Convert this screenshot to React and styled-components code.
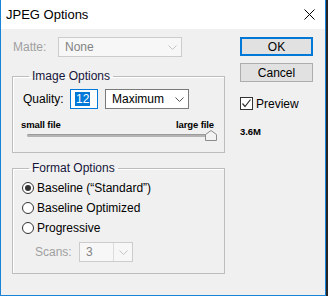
import React from 'react';
import styled, { createGlobalStyle } from 'styled-components';

const GlobalStyle = createGlobalStyle`
  html, body {
    margin: 0;
    padding: 0;
    background: #262626;
  }
  body {
    font-family: "Liberation Sans", Arial, sans-serif;
    font-size: 12px;
    color: #000;
  }
`;

const Window = styled('div')`
  width: 326px;
  height: 296px;
  box-sizing: border-box;
  border: 1px solid #1883d7;
  border-top: none;
  background: #f0f0f0;
  display: flex;
  flex-direction: column;
`;

const TitleBar = styled('div')`
  height: 29px;
  flex: none;
  background: #fff;
  display: flex;
  align-items: center;
  justify-content: space-between;
  padding: 0 10px 0 5px;
  font-size: 13px;
  color: #000;
`;

const Body = styled('div')`
  display: flex;
  gap: 15px;
  padding: 8px 0 0 11px;
`;

const LeftColumn = styled('div')`
  width: 213px;
  display: flex;
  flex-direction: column;
`;

const RightColumn = styled('div')`
  width: 73px;
  display: flex;
  flex-direction: column;
`;

const Row = styled('div')`
  display: flex;
  align-items: center;
  gap: ${(p) => p.gap || 0}px;
  padding-left: ${(p) => p.indent || 0}px;
  margin-top: ${(p) => p.top || 0}px;
  height: ${(p) => p.h || 20}px;
`;

const Label = styled('span')`
  color: ${(p) => (p.disabled ? '#a0a0a0' : '#000')};
  width: ${(p) => (p.w ? `${p.w}px` : 'auto')};
  flex: none;
`;

const SelectBox = styled('div')`
  width: ${(p) => p.w}px;
  height: 20px;
  box-sizing: border-box;
  margin-left: ${(p) => p.left || 0}px;
  border: 1px solid ${(p) => (p.disabled ? '#cccccc' : '#7a7a7a')};
  background: ${(p) => (p.disabled ? '#f7f7f7' : '#fff')};
  color: ${(p) => (p.disabled ? '#838383' : '#000')};
  display: flex;
  align-items: center;
  padding-left: 6px;
  flex: none;
`;

const SelectText = styled('span')`
  flex: 1;
`;

const SelectArrow = styled('span')`
  width: 18px;
  height: 100%;
  display: flex;
  align-items: center;
  justify-content: center;
  border-left: ${(p) => (p.split ? '1px solid #dcdcdc' : 'none')};
`;

const Group = styled('fieldset')`
  margin: ${(p) => p.top}px 0 0;
  padding: 0;
  height: ${(p) => p.h}px;
  box-sizing: border-box;
  border: 1px solid #bdbdbd;
  box-shadow: inset 1px 1px 0 #fff;
  min-width: 0;
`;

const Legend = styled('legend')`
  margin-left: 16px;
  padding: 0 3px;
  font-size: 12px;
  color: #15153a;
  line-height: 14px;
`;

const QualityInput = styled('div')`
  width: 28px;
  height: 20px;
  box-sizing: border-box;
  border: 1px solid #0078d7;
  background: #fff;
  display: flex;
  align-items: center;
  padding-left: 4px;
  flex: none;
`;

const Selected = styled('span')`
  background: #0078d7;
  color: #fff;
  line-height: 14px;
  padding: 0 1px;
`;

const SmallText = styled('span')`
  font-size: 9.5px;
  color: #000;
  font-weight: 600;
  letter-spacing: -0.1px;
`;

const FileLabels = styled('div')`
  display: flex;
  justify-content: space-between;
  padding: 0 10px 0 8px;
  margin-top: 9px;
  height: 12px;
  align-items: center;
`;

const SliderArea = styled('div')`
  position: relative;
  margin: 1px 10px 0 14px;
  height: 10px;
`;

const Track = styled('div')`
  position: absolute;
  left: 0;
  right: 0;
  top: 3px;
  height: 3px;
  border-radius: 2px;
  background: #b4b4b4;
  border-top: 1px solid #9a9a9a;
  box-sizing: border-box;
`;

const Thumb = styled('svg')`
  position: absolute;
  right: -3px;
  top: -1px;
`;

const RadioRow = styled('div')`
  display: flex;
  align-items: center;
  gap: 3px;
  height: 20px;
  padding-left: 9px;
  margin-top: ${(p) => p.top || 0}px;
`;

const RadioCircle = styled('span')`
  width: 12px;
  height: 12px;
  box-sizing: border-box;
  border-radius: 50%;
  border: 1px solid #333;
  background: #fff;
  display: flex;
  align-items: center;
  justify-content: center;
  flex: none;
  &::after {
    content: '';
    width: 6px;
    height: 6px;
    border-radius: 50%;
    background: ${(p) => (p.checked ? '#333' : 'transparent')};
  }
`;

const Button = styled('button')`
  width: 73px;
  height: 19px;
  margin: ${(p) => p.top || 0}px 0 0;
  padding: 0;
  box-sizing: border-box;
  font-family: inherit;
  font-size: 12px;
  color: #000;
  background: #e1e1e1;
  border: ${(p) => (p.primary ? '2px solid #0078d7' : '1px solid #adadad')};
  cursor: pointer;
`;

const CheckRow = styled('label')`
  display: flex;
  align-items: center;
  gap: 3px;
  margin-top: 15px;
  height: 13px;
`;

const CheckBox = styled('span')`
  width: 13px;
  height: 13px;
  box-sizing: border-box;
  border: 1px solid #333;
  background: #fff;
  display: flex;
  align-items: center;
  justify-content: center;
  flex: none;
`;

const SizeText = styled(SmallText)`
  margin-top: 16px;
`;

const Chevron = ({ color }) => (
  <svg width="9" height="5" viewBox="0 0 9 5">
    <path d="M0.5 0.5 L4.5 4.5 L8.5 0.5" fill="none" stroke={color} strokeWidth="1" />
  </svg>
);

const App = () => (
  <>
    <GlobalStyle />
    <Window>
      <TitleBar>
        <span>JPEG Options</span>
        <svg width="11" height="11" viewBox="0 0 11 11">
          <path d="M0.5 0.5 L10.5 10.5 M10.5 0.5 L0.5 10.5" stroke="#000" strokeWidth="1" />
        </svg>
      </TitleBar>
      <Body>
        <LeftColumn>
          <Row gap={12} indent={1}>
            <Label disabled w={33}>Matte:</Label>
            <SelectBox w={124} disabled>
              <SelectText>None</SelectText>
              <SelectArrow>
                <Chevron color="#c4c4c4" />
              </SelectArrow>
            </SelectBox>
          </Row>
          <Group top={12} h={84}>
            <Legend>Image Options</Legend>
            <Row indent={10} top={6}>
              <Label w={47}>Quality:</Label>
              <QualityInput>
                <Selected>12</Selected>
              </QualityInput>
              <SelectBox w={84} left={7}>
                <SelectText>Maximum</SelectText>
                <SelectArrow>
                  <Chevron color="#555" />
                </SelectArrow>
              </SelectBox>
            </Row>
            <FileLabels>
              <SmallText>small file</SmallText>
              <SmallText>large file</SmallText>
            </FileLabels>
            <SliderArea>
              <Track />
              <Thumb width="12" height="11" viewBox="0 0 12 11">
                <path d="M0.5 10.5 L0.5 4.5 L6 0.5 L11.5 4.5 L11.5 10.5 Z" fill="#f2f2f2" stroke="#8c8c8c" strokeWidth="1" />
              </Thumb>
            </SliderArea>
          </Group>
          <Group top={8} h={113}>
            <Legend>Format Options</Legend>
            <RadioRow top={3}>
              <RadioCircle checked />
              <span>Baseline (“Standard”)</span>
            </RadioRow>
            <RadioRow>
              <RadioCircle />
              <span>Baseline Optimized</span>
            </RadioRow>
            <RadioRow>
              <RadioCircle />
              <span>Progressive</span>
            </RadioRow>
            <Row indent={22} top={4} gap={12}>
              <Label disabled w={32}>Scans:</Label>
              <SelectBox w={54} disabled>
                <SelectText>3</SelectText>
                <SelectArrow split>
                  <Chevron color="#c4c4c4" />
                </SelectArrow>
              </SelectBox>
            </Row>
          </Group>
        </LeftColumn>
        <RightColumn>
          <Button primary>OK</Button>
          <Button top={7}>Cancel</Button>
          <CheckRow>
            <CheckBox>
              <svg width="11" height="11" viewBox="0 0 11 11">
                <path d="M1.5 5.5 L4 8.5 L9.5 1.5" fill="none" stroke="#333" strokeWidth="1.2" />
              </svg>
            </CheckBox>
            <span>Preview</span>
          </CheckRow>
          <SizeText>3.6M</SizeText>
        </RightColumn>
      </Body>
    </Window>
  </>
);

export default App;
